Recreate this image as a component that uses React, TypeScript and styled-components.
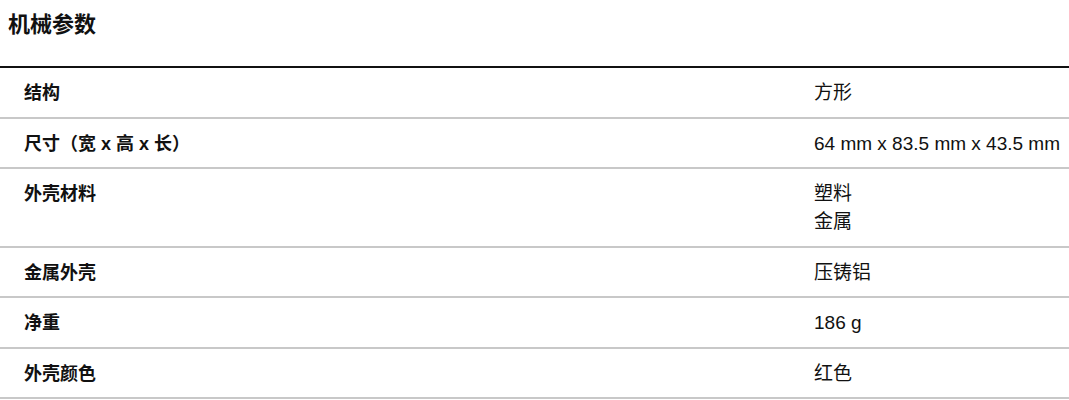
import React from "react";
import styled, { createGlobalStyle } from "styled-components";

const GlobalStyle = createGlobalStyle`
  body {
    margin: 0;
    background: #ffffff;
    color: #111111;
    font-family: "Liberation Sans", "Noto Sans CJK SC", Arial, sans-serif;
  }
`;

const Section = styled.section`
  width: 100%;
`;

const Title = styled.h2`
  margin: 0;
  padding: 10px 8px 26px;
  font-size: 22px;
  line-height: 30px;
  font-weight: 700;
  color: #111111;
`;

const Table = styled.div`
  border-top: 2px solid #111111;
`;

const Row = styled.div`
  display: grid;
  grid-template-columns: 814px 1fr;
  padding: 11px 0 9.5px;
  border-bottom: 2px solid #c8c8c8;
`;

const Label = styled.div`
  padding-left: 24px;
  font-size: 18px;
  line-height: 28px;
  font-weight: 700;
`;

const Value = styled.div`
  font-size: 19px;
  line-height: 28px;
  white-space: nowrap;
`;

const Line = styled.div``;

type Spec = { label: string; values: string[] };

const specs: Spec[] = [
  { label: "结构", values: ["方形"] },
  { label: "尺寸（宽 x 高 x 长）", values: ["64 mm x 83.5 mm x 43.5 mm"] },
  { label: "外壳材料", values: ["塑料", "金属"] },
  { label: "金属外壳", values: ["压铸铝"] },
  { label: "净重", values: ["186 g"] },
  { label: "外壳颜色", values: ["红色"] },
];

const App = () => {
  return (
    <Section>
      <GlobalStyle />
      <Title>机械参数</Title>
      <Table>
        {specs.map((s, i) => (
          <Row key={i}>
            <Label>{s.label}</Label>
            <Value>
              {s.values.map((v, j) => (
                <Line key={j}>{v}</Line>
              ))}
            </Value>
          </Row>
        ))}
      </Table>
    </Section>
  );
};

export default App;
